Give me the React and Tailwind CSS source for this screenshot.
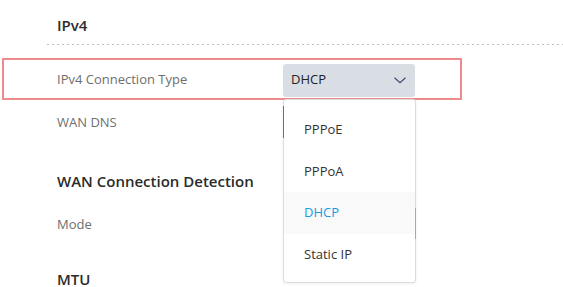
const OPTIONS = ["PPPoE", "PPPoA", "DHCP", "Static IP"];

function Heading({ children, className = "" }) {
  return (
    <div className={`pl-[57px] text-[15px] font-semibold text-[#2b2b2b] ${className}`}>
      {children}
    </div>
  );
}

function Label({ children, className = "" }) {
  return (
    <div className={`pl-[57px] text-[13px] text-[#6e6e6e] ${className}`}>{children}</div>
  );
}

export default function App() {
  return (
    <div
      className="relative h-[287px] w-[563px] overflow-hidden bg-white"
      style={{ fontFamily: '"Open Sans", "Noto Sans", sans-serif' }}
    >
      <Heading className="pt-[14px] h-[44px] leading-[22px]">IPv4</Heading>
      <div className="ml-[47px] h-px bg-[linear-gradient(to_right,#bdbdbd_40%,transparent_0)] bg-[length:5px_1px]" />

      <div className="ml-[2px] mt-[13px] flex h-[42px] w-[460px] items-center border-2 border-[#ef8a8a] pt-[2px]">
        <div className="w-[279px] pl-[53px] text-[13px] text-[#6e6e6e]">IPv4 Connection Type</div>
        <div className="flex h-[33px] w-[132px] items-center justify-between rounded-[3px] bg-[#d9dee5] pl-[8px] pr-[9px] text-[13px] text-[#222]">
          <span>DHCP</span>
          <svg width="12" height="7" viewBox="0 0 12 7" fill="none" className="mt-[1px]">
            <polyline points="0.5,0.8 6,5.8 11.5,0.8" stroke="#3b4d6e" strokeWidth="1.2" />
          </svg>
        </div>
      </div>

      <Label className="mt-[12px] leading-[20px]">WAN DNS</Label>
      <Heading className="mt-[38px] leading-[22px]">WAN Connection Detection</Heading>
      <Label className="mt-[22px] leading-[20px]">Mode</Label>
      <Heading className="mt-[34px] leading-[22px]">MTU</Heading>

      <div className="absolute left-[283px] top-[99px] w-[133px] rounded-[3px] border border-[#dcdcdc] bg-white pb-[6px] pt-[9px] shadow-[0_1px_3px_rgba(0,0,0,0.06)]">
        {OPTIONS.map((o) => (
          <div
            key={o}
            className={`flex h-[41.7px] items-center pl-[20px] text-[13px] ${
              o === "DHCP" ? "bg-[#f9f9f9] text-[#1a9be0]" : "text-[#333]"
            }`}
          >
            {o}
          </div>
        ))}
        <div className="absolute -left-px top-[6px] h-[32px] w-px bg-[#1a9b78]" />
        <div className="absolute -right-px top-[108px] h-[31px] w-px bg-[#a8a8a8]" />
      </div>
    </div>
  );
}
